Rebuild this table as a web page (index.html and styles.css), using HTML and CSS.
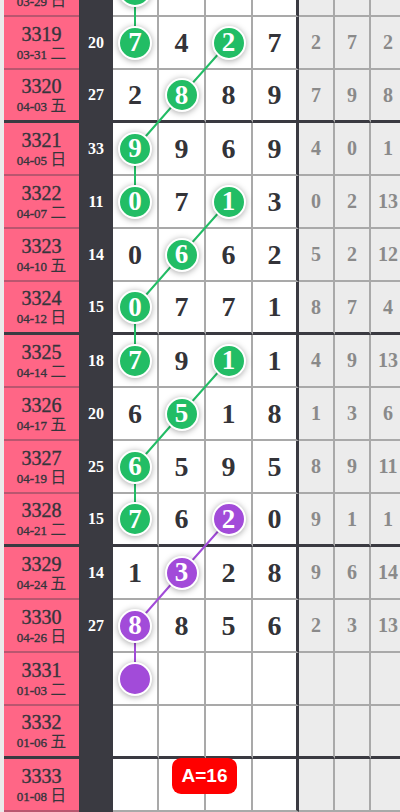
FILE: index.html
```html
<!DOCTYPE html>
<html lang="zh">
<head>
    <meta charset="UTF-8">
    <meta name="viewport" content="width=device-width, initial-scale=1.0">
    <title>走势图</title>
    <link rel="stylesheet" href="styles.css">
</head>
<body>
    <div class="board">
        <!-- connecting lines between the balls, drawn under them -->
        <svg class="links" width="403" height="848" viewBox="0 0 403 848">
            <g fill="none" stroke-width="2">
                <polyline stroke="#22bd65" points="131,25.5 131,78.5"/>
                <polyline stroke="#22bd65" points="224.5,78.5 177.5,131.5 131,184.5 131,237.5"/>
                <polyline stroke="#22bd65" points="224.5,237.5 177.5,290.5 131,343.5 131,396.5"/>
                <polyline stroke="#22bd65" points="224.5,396.5 177.5,449.5 131,502.5 131,555.5"/>
                <polyline stroke="#a24bd9" points="224.5,555.5 177.5,608.5 131,661.5 131,714.5"/>
            </g>
        </svg>

        <div class="row">
            <div class="issue"><b>3318</b><span>03-29 <em>日</em></span></div>
            <div class="sum">24</div>
            <div class="d"><i class="ball">7</i></div>
            <div class="d"></div>
            <div class="d"></div>
            <div class="d"></div>
            <div class="m"></div><div class="m"></div><div class="m"></div>
        </div>
        <div class="row">
            <div class="issue"><b>3319</b><span>03-31 <em>二</em></span></div>
            <div class="sum">20</div>
            <div class="d"><i class="ball">7</i></div>
            <div class="d">4</div>
            <div class="d"><i class="ball">2</i></div>
            <div class="d">7</div>
            <div class="m">2</div><div class="m">7</div><div class="m">2</div>
        </div>
        <div class="row end">
            <div class="issue"><b>3320</b><span>04-03 <em>五</em></span></div>
            <div class="sum">27</div>
            <div class="d">2</div>
            <div class="d"><i class="ball">8</i></div>
            <div class="d">8</div>
            <div class="d">9</div>
            <div class="m">7</div><div class="m">9</div><div class="m">8</div>
        </div>
        <div class="row">
            <div class="issue"><b>3321</b><span>04-05 <em>日</em></span></div>
            <div class="sum">33</div>
            <div class="d"><i class="ball">9</i></div>
            <div class="d">9</div>
            <div class="d">6</div>
            <div class="d">9</div>
            <div class="m">4</div><div class="m">0</div><div class="m">1</div>
        </div>
        <div class="row">
            <div class="issue"><b>3322</b><span>04-07 <em>二</em></span></div>
            <div class="sum">11</div>
            <div class="d"><i class="ball">0</i></div>
            <div class="d">7</div>
            <div class="d"><i class="ball">1</i></div>
            <div class="d">3</div>
            <div class="m">0</div><div class="m">2</div><div class="m">13</div>
        </div>
        <div class="row">
            <div class="issue"><b>3323</b><span>04-10 <em>五</em></span></div>
            <div class="sum">14</div>
            <div class="d">0</div>
            <div class="d"><i class="ball">6</i></div>
            <div class="d">6</div>
            <div class="d">2</div>
            <div class="m">5</div><div class="m">2</div><div class="m">12</div>
        </div>
        <div class="row end">
            <div class="issue"><b>3324</b><span>04-12 <em>日</em></span></div>
            <div class="sum">15</div>
            <div class="d"><i class="ball">0</i></div>
            <div class="d">7</div>
            <div class="d">7</div>
            <div class="d">1</div>
            <div class="m">8</div><div class="m">7</div><div class="m">4</div>
        </div>
        <div class="row">
            <div class="issue"><b>3325</b><span>04-14 <em>二</em></span></div>
            <div class="sum">18</div>
            <div class="d"><i class="ball">7</i></div>
            <div class="d">9</div>
            <div class="d"><i class="ball">1</i></div>
            <div class="d">1</div>
            <div class="m">4</div><div class="m">9</div><div class="m">13</div>
        </div>
        <div class="row">
            <div class="issue"><b>3326</b><span>04-17 <em>五</em></span></div>
            <div class="sum">20</div>
            <div class="d">6</div>
            <div class="d"><i class="ball">5</i></div>
            <div class="d">1</div>
            <div class="d">8</div>
            <div class="m">1</div><div class="m">3</div><div class="m">6</div>
        </div>
        <div class="row">
            <div class="issue"><b>3327</b><span>04-19 <em>日</em></span></div>
            <div class="sum">25</div>
            <div class="d"><i class="ball">6</i></div>
            <div class="d">5</div>
            <div class="d">9</div>
            <div class="d">5</div>
            <div class="m">8</div><div class="m">9</div><div class="m">11</div>
        </div>
        <div class="row end">
            <div class="issue"><b>3328</b><span>04-21 <em>二</em></span></div>
            <div class="sum">15</div>
            <div class="d"><i class="ball">7</i></div>
            <div class="d">6</div>
            <div class="d"><i class="ball purple">2</i></div>
            <div class="d">0</div>
            <div class="m">9</div><div class="m">1</div><div class="m">1</div>
        </div>
        <div class="row">
            <div class="issue"><b>3329</b><span>04-24 <em>五</em></span></div>
            <div class="sum">14</div>
            <div class="d">1</div>
            <div class="d"><i class="ball purple">3</i></div>
            <div class="d">2</div>
            <div class="d">8</div>
            <div class="m">9</div><div class="m">6</div><div class="m">14</div>
        </div>
        <div class="row">
            <div class="issue"><b>3330</b><span>04-26 <em>日</em></span></div>
            <div class="sum">27</div>
            <div class="d"><i class="ball purple">8</i></div>
            <div class="d">8</div>
            <div class="d">5</div>
            <div class="d">6</div>
            <div class="m">2</div><div class="m">3</div><div class="m">13</div>
        </div>
        <div class="row">
            <div class="issue"><b>3331</b><span>01-03 <em>二</em></span></div>
            <div class="sum"></div>
            <div class="d"><i class="ball purple"></i></div>
            <div class="d"></div>
            <div class="d"></div>
            <div class="d"></div>
            <div class="m"></div><div class="m"></div><div class="m"></div>
        </div>
        <div class="row end">
            <div class="issue"><b>3332</b><span>01-06 <em>五</em></span></div>
            <div class="sum"></div>
            <div class="d"></div>
            <div class="d"></div>
            <div class="d"></div>
            <div class="d"></div>
            <div class="m"></div><div class="m"></div><div class="m"></div>
        </div>
        <div class="row last">
            <div class="issue"><b>3333</b><span>01-08 <em>日</em></span></div>
            <div class="sum"></div>
            <div class="d"></div>
            <div class="d"></div>
            <div class="d"></div>
            <div class="d"></div>
            <div class="m"></div><div class="m"></div><div class="m"></div>
            <div class="badge">A=16</div>
        </div>
    </div>
</body>
</html>
```

FILE: styles.css
```css
body {
    margin: 0;
    background-color: #ebebeb;
    font-family: "Liberation Serif", "Noto Sans CJK SC", serif;
    overflow: hidden;
}

.board {
    position: relative;
    width: 403px;
    margin: -36px 0 0 4px; /* list is scrolled, first row is cut off */
}

.links {
    position: absolute;
    top: 0;
    left: 0;
    z-index: 1;
}

.row {
    display: grid;
    grid-template-columns: 75px 34px 46px 47px 47px 46px 36px 36px 36px;
    height: 53px;
}

.row > div {
    box-sizing: border-box;
    display: flex;
    align-items: center;
    justify-content: center;
    border-bottom: 2px solid #a9a9a9;
}

.issue {
    flex-direction: column;
    background-color: #ff6686;
    color: #35353c;
    padding-top: 2px;
    -webkit-text-stroke: 0.35px #35353c; /* text looks a bit heavier than regular */
}

.row > .issue {
    border-bottom-color: #b9566f;
}

.issue b {
    font-size: 20px;
    font-weight: normal;
    line-height: 20px;
}

.issue span {
    font-size: 13px;
    line-height: 19px;
}

.issue em {
    font-style: normal;
    font-size: 16px;
    -webkit-text-stroke: 0;
}

.sum {
    background-color: #3a3a41;
    color: white;
    font-size: 16px;
    font-weight: bold;
}

.row > .sum {
    border-bottom-color: #3a3a41;
}

.d {
    background-color: white;
    color: #333338;
    font-size: 28px;
    font-weight: bold;
    border-right: 2px solid #a9a9a9;
}

.d:nth-child(6) {
    border-right: 3px solid #3a3a41;
}

.m {
    background-color: #ececec;
    color: #8a8a8a;
    font-size: 20px;
    font-weight: bold;
    border-right: 2px solid #a9a9a9;
}

.row.end > div {
    border-bottom: 3px solid #3a3a41;
}

.ball {
    position: relative;
    z-index: 2;
    display: flex;
    align-items: center;
    justify-content: center;
    width: 30px;
    height: 30px;
    border: 2px solid white;
    border-radius: 50%;
    background-color: #22bd65;
    color: white;
    font-style: normal;
    font-size: 27px;
    font-weight: bold;
    box-shadow: 0 1px 6px rgba(0, 0, 0, 0.35);
}

.ball.purple {
    background-color: #a24bd9;
}

.row.last {
    position: relative;
}

.row > .badge {
    position: absolute;
    top: -1px;
    left: 168px;
    z-index: 3;
    width: 65px;
    height: 36px;
    border: none;
    border-radius: 9px;
    background-color: #ff0000;
    color: white;
    font-family: "Liberation Sans", Arial, sans-serif;
    font-size: 19px;
    font-weight: bold;
}
```
